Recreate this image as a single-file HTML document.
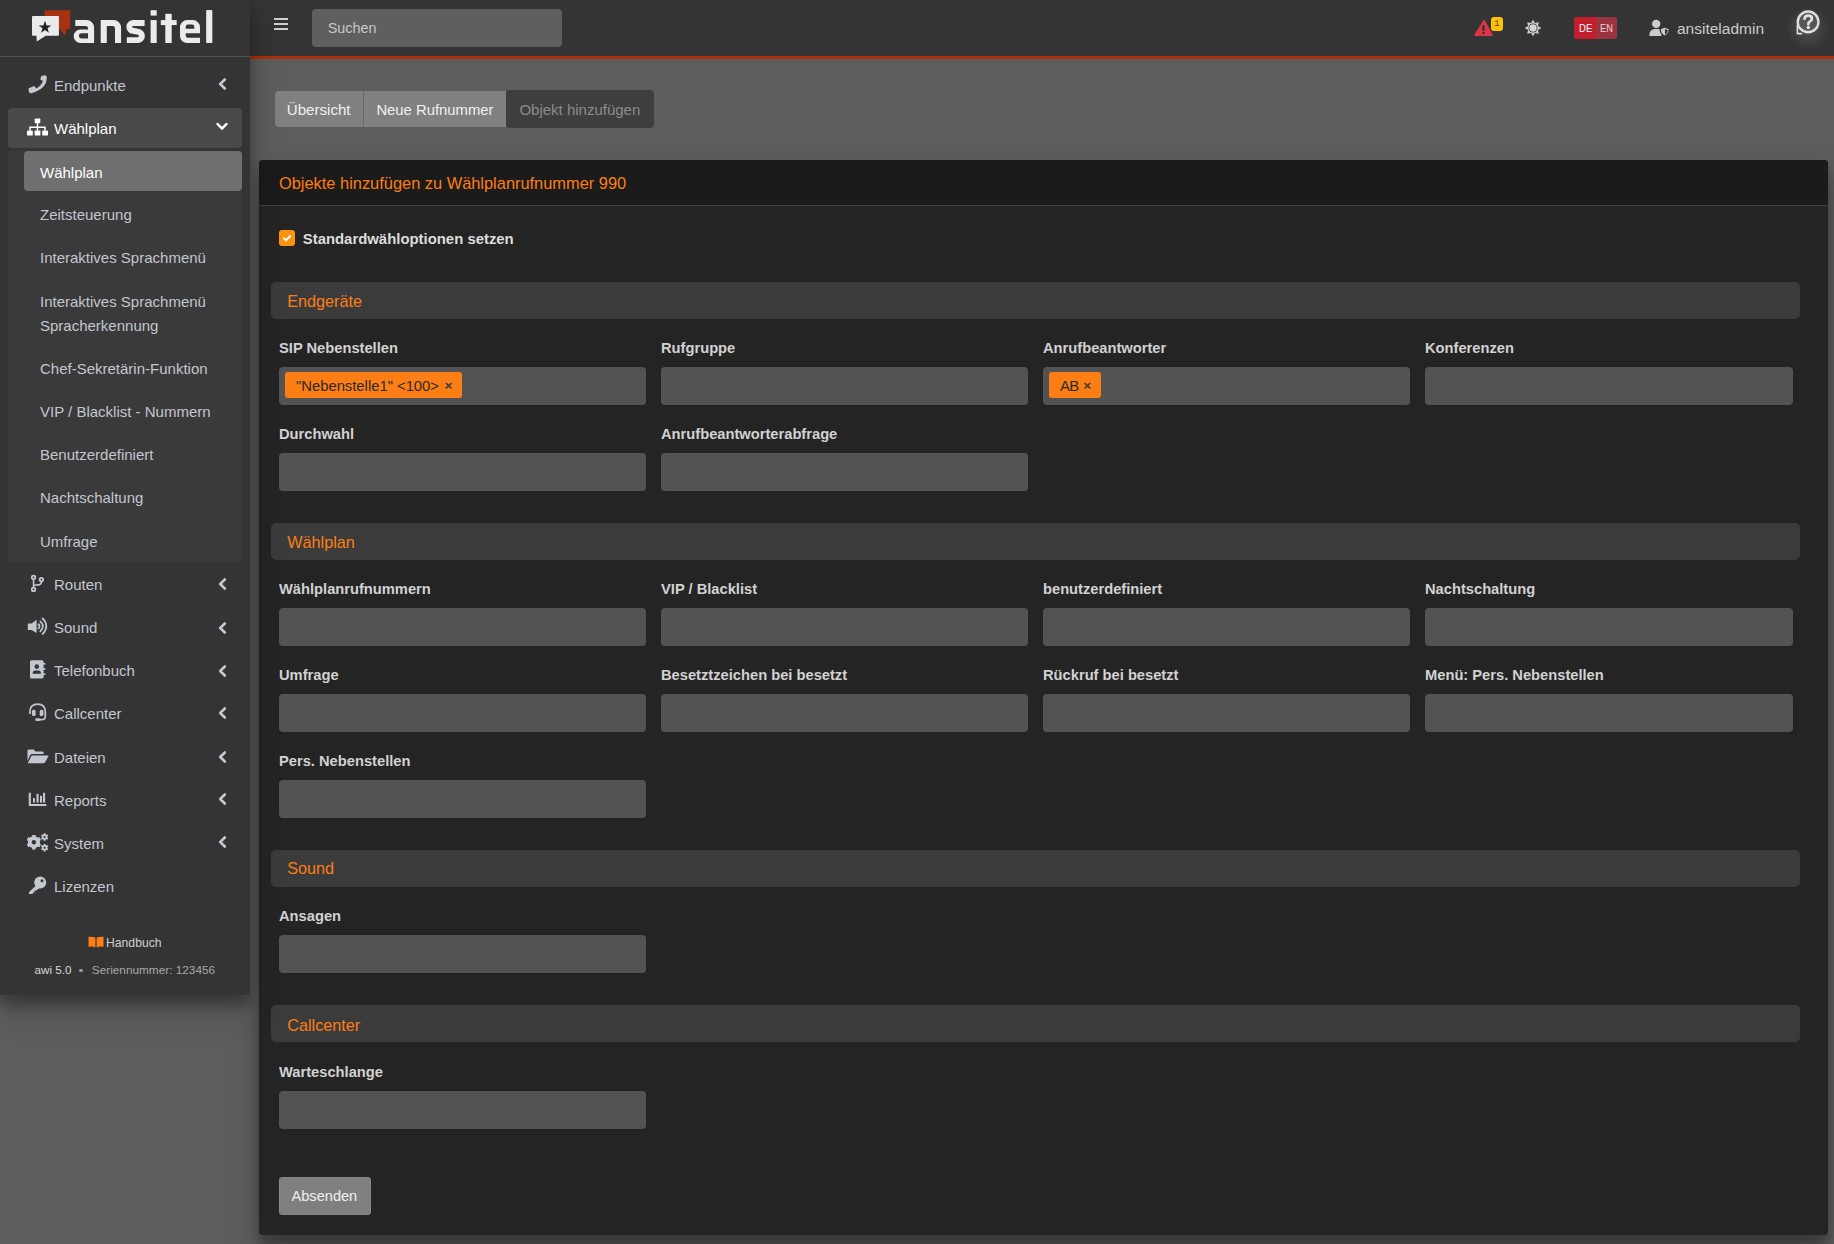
<!DOCTYPE html>
<html><head><meta charset="utf-8">
<style>
*{box-sizing:border-box;margin:0;padding:0}
html,body{width:1834px;height:1244px;overflow:hidden}
body{background:#5d5d5d;font-family:"Liberation Sans",sans-serif;position:relative}
.t{position:absolute;line-height:0;white-space:nowrap}
.r{position:absolute}
</style></head><body>
<div class="r" style="left:250px;top:0px;width:1584px;height:1244px;background:#5d5d5d;border-radius:0px;"></div>
<div class="r" style="left:250px;top:0px;width:1584px;height:56px;background:#343434;border-radius:0px;box-shadow:none"></div>
<div class="r" style="left:250px;top:56px;width:1584px;height:3px;background:#ad300c;border-radius:0px;"></div>
<div class="r" style="left:274px;top:18px;width:14px;height:2px;background:#d0d0d0;border-radius:0px;"></div>
<div class="r" style="left:274px;top:23px;width:14px;height:2px;background:#d0d0d0;border-radius:0px;"></div>
<div class="r" style="left:274px;top:28px;width:14px;height:2px;background:#d0d0d0;border-radius:0px;"></div>
<div class="r" style="left:312px;top:9px;width:250px;height:38px;background:#5f5f5f;border-radius:4px;"></div>
<div class="t" style="left:327.7px;top:28px;font-size:14.4px;color:#c8c8c8;font-weight:400;">Suchen</div>
<svg class="r" style="left:1474px;top:19px;" width="19" height="18" viewBox="0 0 19 18"><path d="M9.5 1.2 Q10.2 0.3 10.9 1.2 L18.6 15.6 Q19 17 17.6 17 L1.4 17 Q0 17 0.4 15.6 Z" fill="#dc3545"/><rect x="8.4" y="6" width="2.2" height="6" rx="1" fill="#343434"/><circle cx="9.5" cy="14" r="1.2" fill="#343434"/></svg>
<div class="r" style="left:1491px;top:17px;width:12px;height:14px;background:#ffc107;border-radius:3px;"></div>
<div class="t" style="left:1494.3px;top:24px;font-size:9px;color:#5c4b12;font-weight:400;font-family:'Liberation Mono',monospace">1</div>
<svg class="r" style="left:1525.3px;top:20px;" width="16" height="16" viewBox="0 0 16 16"><polygon points="8.00,-0.30 10.03,3.10 13.87,2.13 12.90,5.97 16.30,8.00 12.90,10.03 13.87,13.87 10.03,12.90 8.00,16.30 5.97,12.90 2.13,13.87 3.10,10.03 -0.30,8.00 3.10,5.97 2.13,2.13 5.97,3.10" fill="#cfcfcf"/><circle cx="8" cy="8" r="4.5" fill="#343434"/><circle cx="8" cy="8" r="3.7" fill="#d4d4d4"/></svg>
<div class="r" style="left:1574px;top:17px;width:43px;height:22px;background:#9c343f;border-radius:3px;"></div>
<div class="r" style="left:1574px;top:17px;width:22px;height:22px;background:#c21f2e;border-radius:0px;border-radius:3px 0 0 3px"></div>
<div class="t" style="left:1578.8px;top:27.7px;font-size:10.6px;color:#ffffff;font-weight:400;transform:scaleX(0.9);transform-origin:0 0">DE</div>
<div class="t" style="left:1599.6px;top:27.7px;font-size:10.6px;color:#ecccd0;font-weight:400;transform:scaleX(0.88);transform-origin:0 0">EN</div>
<svg class="r" style="left:1649px;top:19px;" width="22" height="19" viewBox="0 0 22 19"><circle cx="7.2" cy="4.9" r="4.2" fill="#cccccc"/><path d="M0.3 16.9 Q0.3 10.2 6 10 L10.2 10 Q11.4 10 12.2 10.4 L12.4 17 L0.8 17 Z" fill="#cccccc"/><path d="M15.75 8 L20.3 9.9 Q20.5 14.9 15.75 17.4 Q11 14.9 11.2 9.9 Z" fill="#cccccc" stroke="#343434" stroke-width="1.3"/><path d="M16 10.1 L18.8 11.2 Q18.7 14.3 16 15.7 Z" fill="#343434"/></svg>
<div class="t" style="left:1677px;top:29px;font-size:15.5px;color:#cccccc;font-weight:400;">ansiteladmin</div>
<div class="r" style="left:1780px;top:4px;width:54px;height:50px;background:radial-gradient(circle at 28px 24px, rgba(255,255,255,.16) 0, rgba(255,255,255,.07) 11px, rgba(255,255,255,0) 22px);border-radius:0px;"></div>
<svg class="r" style="left:1790px;top:4px;" width="36" height="36" viewBox="0 0 36 36"><path d="M7.4 21 L7.4 29.2 Q7.4 29.6 7.8 29.6 L12.2 29.6" stroke="#dddddd" stroke-width="1.6" fill="none"/><circle cx="18.1" cy="17.9" r="10.35" fill="#555555" stroke="#dedede" stroke-width="2.4"/><path d="M14.6 14.8 Q14.6 11.6 18.2 11.6 Q21.9 11.6 21.9 14.6 Q21.9 16.6 19.8 17.6 Q18.3 18.4 18.3 20.2" stroke="#e2e2e2" stroke-width="2.7" fill="none" stroke-linecap="round"/><circle cx="18.3" cy="23.6" r="1.75" fill="#e2e2e2"/></svg>
<div class="r" style="left:0px;top:0px;width:250px;height:995px;background:#343434;border-radius:0px;box-shadow:0 14px 28px rgba(0,0,0,.25),0 10px 10px rgba(0,0,0,.22);z-index:1"></div>
<div class="r" style="left:0;top:0;width:250px;height:995px;z-index:2">
<div class="r" style="left:0px;top:56px;width:250px;height:1px;background:#4b545c;border-radius:0px;"></div>
<svg class="r" style="left:30px;top:8px;" width="44" height="36" viewBox="0 0 44 36"><path d="M14.6 2.2 L40.2 2.2 L40.2 21.3 L36.4 21.3 L35.4 28.1 L30 21.3 L14.6 21.3 Z" fill="#a8310f"/><path d="M3 8.1 L27.9 8.1 Q28.9 8.1 28.9 9.1 L28.9 26.7 Q28.9 27.7 27.9 27.7 L15.7 27.7 L6.7 33.6 L6.5 27.7 L3 27.7 Q2 27.7 2 26.7 L2 9.1 Q2 8.1 3 8.1 Z" fill="#ebebeb"/><polygon points="15,12.8 16.6,17.4 21.3,17.4 17.5,20.2 18.9,24.7 15,21.9 11.1,24.7 12.5,20.2 8.7,17.4 13.4,17.4" fill="#222"/></svg>
<svg class="r" style="left:0;top:0" width="230" height="50" viewBox="0 0 230 50"><g fill="#ebebeb" fill-rule="evenodd"><path d="M75.3 20.1 L86.5 20.1 A7.6 7.6 0 0 1 94.1 27.7 L94.1 43 L80.5 43 A6.8 6.8 0 0 1 73.7 36.2 A6.7 6.7 0 0 1 80.4 29.5 L88 29.5 L88 28.3 A2.2 2.2 0 0 0 85.8 26.1 L75.3 26.1 Z M88 33.2 L81.6 33.2 A2.65 2.65 0 0 0 81.6 38.5 L88 38.5 Z"/><path d="M100.7 43 L100.7 20.1 L113.5 20.1 A7.6 7.6 0 0 1 121.1 27.7 L121.1 43 L115 43 L115 28.5 A2.4 2.4 0 0 0 112.6 26.1 L106.8 26.1 L106.8 43 Z"/><rect x="150.6" y="20.1" width="6.1" height="22.9"/><rect x="150.6" y="10.2" width="6.1" height="5.4"/><rect x="165.3" y="13.8" width="6.4" height="29.2"/><rect x="160.8" y="20.1" width="15.9" height="5"/><path d="M200 43 L187.2 43 A7.2 7.2 0 0 1 180 35.8 L180 27.3 A7.2 7.2 0 0 1 187.2 20.1 L192.8 20.1 A7.2 7.2 0 0 1 200 27.3 L200 33.2 L185.7 33.2 L185.7 35.4 A2.3 2.3 0 0 0 188 37.7 L200 37.7 Z M185.7 28.7 L194.3 28.7 L194.3 26.9 A2.3 2.3 0 0 0 192 24.6 L188 24.6 A2.3 2.3 0 0 0 185.7 26.9 Z"/><rect x="206.2" y="10.1" width="6.1" height="32.9"/></g><path d="M144.6 23.05 L133.4 23.05 A3.7 3.7 0 0 0 132.9 30.8 L138.5 31.9 A4.15 4.15 0 0 1 138.2 40.1 L126.8 40.1" stroke="#ebebeb" stroke-width="5.9" fill="none"/></svg>
<svg class="r" style="left:28px;top:75px;" width="20" height="19" viewBox="0 0 20 19"><path d="M13.2 0.9 L16.6 0.3 Q18.7 0.1 18.8 2.4 Q18.9 13.6 3.4 18.2 Q1.1 18.6 0.8 16.6 L0.6 13.2 L6.2 11.1 L8.3 13.6 Q13.1 10.8 15 6.1 L12.3 4.6 Z" fill="#c2c7d0"/></svg>
<div class="t" style="left:54px;top:86.4px;font-size:15px;color:#c2c7d0;font-weight:400;">Endpunkte</div>
<svg class="r" style="left:218px;top:78.3px;" width="9" height="12" viewBox="0 0 9 12"><path d="M6.8 1.5 L2.2 6 L6.8 10.5" stroke="#c2c7d0" stroke-width="2.6" fill="none" stroke-linecap="round" stroke-linejoin="round"/></svg>
<div class="r" style="left:8px;top:108px;width:234px;height:40px;background:#494949;border-radius:4px;"></div>
<svg class="r" style="left:26px;top:118px;" width="23" height="18" viewBox="0 0 23 18"><rect x="8.7" y="0.4" width="5.6" height="4.8" rx="0.9" fill="#fff"/><path d="M11.5 5 L11.5 12.6 M4 12.6 L4 9.3 L19 9.3 L19 12.6" stroke="#fff" stroke-width="1.5" fill="none"/><rect x="1" y="12.4" width="5.8" height="5.2" rx="0.9" fill="#fff"/><rect x="8.6" y="12.4" width="5.8" height="5.2" rx="0.9" fill="#fff"/><rect x="16.2" y="12.4" width="5.8" height="5.2" rx="0.9" fill="#fff"/></svg>
<div class="t" style="left:54px;top:129.3px;font-size:15px;color:#ffffff;font-weight:400;">Wählplan</div>
<svg class="r" style="left:216px;top:122px;" width="12" height="9" viewBox="0 0 12 9"><path d="M1.6 2 L6 6.6 L10.4 2" stroke="#ffffff" stroke-width="2.5" fill="none" stroke-linecap="round" stroke-linejoin="round"/></svg>
<div class="r" style="left:8px;top:150.6px;width:234px;height:410px;background:#3a3a3a;border-radius:0px;"></div>
<div class="r" style="left:24px;top:151px;width:218px;height:40px;background:#6f6f6f;border-radius:4px;"></div>
<div class="t" style="left:40px;top:172.5px;font-size:15px;color:#ffffff;font-weight:400;">Wählplan</div>
<div class="t" style="left:40px;top:215.4px;font-size:15px;color:#c2c7d0;font-weight:400;">Zeitsteuerung</div>
<div class="t" style="left:40px;top:258.3px;font-size:15px;color:#c2c7d0;font-weight:400;">Interaktives Sprachmenü</div>
<div class="t" style="left:40px;top:302.2px;font-size:15px;color:#c2c7d0;font-weight:400;">Interaktives Sprachmenü</div>
<div class="t" style="left:40px;top:326.3px;font-size:15px;color:#c2c7d0;font-weight:400;">Spracherkennung</div>
<div class="t" style="left:40px;top:369.2px;font-size:15px;color:#c2c7d0;font-weight:400;">Chef-Sekretärin-Funktion</div>
<div class="t" style="left:40px;top:412.2px;font-size:15px;color:#c2c7d0;font-weight:400;">VIP / Blacklist - Nummern</div>
<div class="t" style="left:40px;top:454.9px;font-size:15px;color:#c2c7d0;font-weight:400;">Benutzerdefiniert</div>
<div class="t" style="left:40px;top:498.3px;font-size:15px;color:#c2c7d0;font-weight:400;">Nachtschaltung</div>
<div class="t" style="left:40px;top:541.7px;font-size:15px;color:#c2c7d0;font-weight:400;">Umfrage</div>
<svg class="r" style="left:30px;top:574px;" width="15" height="19" viewBox="0 0 15 19"><circle cx="3.56" cy="3.3" r="1.75" stroke="#c2c7d0" stroke-width="1.8" fill="none"/><circle cx="3.56" cy="15.4" r="1.75" stroke="#c2c7d0" stroke-width="1.8" fill="none"/><circle cx="11.4" cy="5.6" r="1.75" stroke="#c2c7d0" stroke-width="1.8" fill="none"/><path d="M3.56 5.1 L3.56 13.6 M11.4 7.4 Q11.4 10.7 8 10.9 L6.2 11 Q3.56 11.2 3.56 12.8" stroke="#c2c7d0" stroke-width="1.6" fill="none"/></svg>
<div class="t" style="left:54px;top:585.1px;font-size:15px;color:#c2c7d0;font-weight:400;">Routen</div>
<svg class="r" style="left:218px;top:577.6px;" width="9" height="12" viewBox="0 0 9 12"><path d="M6.8 1.5 L2.2 6 L6.8 10.5" stroke="#c2c7d0" stroke-width="2.6" fill="none" stroke-linecap="round" stroke-linejoin="round"/></svg>
<svg class="r" style="left:27px;top:617px;" width="22" height="19" viewBox="0 0 22 19"><path d="M0.8 6.5 L4.6 6.5 L9.6 2.7 L9.6 16 L4.6 13 L0.8 13 Z" fill="#c2c7d0"/><path d="M11.4 7.3 Q13.8 9.35 11.4 11.4" stroke="#c2c7d0" stroke-width="1.8" fill="none" stroke-linecap="round"/><path d="M13.3 4.4 Q18.6 9.35 13.3 14.3" stroke="#c2c7d0" stroke-width="1.7" fill="none" stroke-linecap="round"/><path d="M15.6 1.4 Q23 9.2 15.6 17" stroke="#c2c7d0" stroke-width="1.7" fill="none" stroke-linecap="round"/></svg>
<div class="t" style="left:54px;top:628px;font-size:15px;color:#c2c7d0;font-weight:400;">Sound</div>
<svg class="r" style="left:218px;top:621.8px;" width="9" height="12" viewBox="0 0 9 12"><path d="M6.8 1.5 L2.2 6 L6.8 10.5" stroke="#c2c7d0" stroke-width="2.6" fill="none" stroke-linecap="round" stroke-linejoin="round"/></svg>
<svg class="r" style="left:29px;top:660px;" width="17" height="19" viewBox="0 0 17 19"><rect x="1" y="0.2" width="13.6" height="18.4" rx="1.6" fill="#c2c7d0"/><rect x="14" y="3" width="2.4" height="1.6" fill="#c2c7d0"/><rect x="14" y="8.2" width="2.4" height="1.6" fill="#c2c7d0"/><rect x="14" y="13.4" width="2.4" height="1.6" fill="#c2c7d0"/><circle cx="7.8" cy="6.6" r="2.3" fill="#343434"/><path d="M3.6 13.8 Q3.6 10.4 6.4 10.4 L9.2 10.4 Q12 10.4 12 13.8 Z" fill="#343434"/></svg>
<div class="t" style="left:54px;top:670.9px;font-size:15px;color:#c2c7d0;font-weight:400;">Telefonbuch</div>
<svg class="r" style="left:218px;top:664.9px;" width="9" height="12" viewBox="0 0 9 12"><path d="M6.8 1.5 L2.2 6 L6.8 10.5" stroke="#c2c7d0" stroke-width="2.6" fill="none" stroke-linecap="round" stroke-linejoin="round"/></svg>
<svg class="r" style="left:28px;top:703px;" width="20" height="19" viewBox="0 0 20 19"><path d="M1.9 10.9 L1.9 9 Q1.9 1.1 9.7 1.1 Q17.3 1.1 17.3 9 L17.3 13.2 Q17.3 16.7 13.8 16.7 L10 16.7" stroke="#c2c7d0" stroke-width="1.7" fill="none"/><rect x="3.9" y="6.8" width="3.7" height="6.2" rx="1.6" fill="#c2c7d0"/><rect x="11.7" y="6.8" width="3.7" height="6.2" rx="1.6" fill="#c2c7d0"/><rect x="7.2" y="15.3" width="4.8" height="2.7" rx="1.35" fill="#c2c7d0"/></svg>
<div class="t" style="left:54px;top:714px;font-size:15px;color:#c2c7d0;font-weight:400;">Callcenter</div>
<svg class="r" style="left:218px;top:707.3px;" width="9" height="12" viewBox="0 0 9 12"><path d="M6.8 1.5 L2.2 6 L6.8 10.5" stroke="#c2c7d0" stroke-width="2.6" fill="none" stroke-linecap="round" stroke-linejoin="round"/></svg>
<svg class="r" style="left:27px;top:749px;" width="22" height="15" viewBox="0 0 22 15"><path d="M0.5 12 L0.5 1.6 Q0.5 0.5 1.6 0.5 L6.6 0.5 L8.4 2.4 L15.5 2.4 Q16.6 2.4 16.6 3.5 L16.6 5 L5 5 Q3.6 5 3 6.2 Z" fill="#c2c7d0"/><path d="M4.6 6.4 L21 6.4 Q21.8 6.4 21.4 7.2 L18 13.4 Q17.5 14.2 16.6 14.2 L0.8 14.2 Z" fill="#c2c7d0"/></svg>
<div class="t" style="left:54px;top:758px;font-size:15px;color:#c2c7d0;font-weight:400;">Dateien</div>
<svg class="r" style="left:218px;top:750.5px;" width="9" height="12" viewBox="0 0 9 12"><path d="M6.8 1.5 L2.2 6 L6.8 10.5" stroke="#c2c7d0" stroke-width="2.6" fill="none" stroke-linecap="round" stroke-linejoin="round"/></svg>
<svg class="r" style="left:28px;top:792px;" width="19" height="15" viewBox="0 0 19 15"><path d="M1.8 0.8 L1.8 13.05 L18.3 13.05" stroke="#c2c7d0" stroke-width="2.1" fill="none"/><rect x="5" y="6" width="1.9" height="4.6" fill="#c2c7d0"/><rect x="8.5" y="1.8" width="2.1" height="8.8" fill="#c2c7d0"/><rect x="12" y="3.8" width="2.1" height="6.8" fill="#c2c7d0"/><rect x="15" y="0.8" width="2.1" height="9.8" fill="#c2c7d0"/></svg>
<div class="t" style="left:54px;top:800.9px;font-size:15px;color:#c2c7d0;font-weight:400;">Reports</div>
<svg class="r" style="left:218px;top:793.3px;" width="9" height="12" viewBox="0 0 9 12"><path d="M6.8 1.5 L2.2 6 L6.8 10.5" stroke="#c2c7d0" stroke-width="2.6" fill="none" stroke-linecap="round" stroke-linejoin="round"/></svg>
<svg class="r" style="left:26px;top:833px;" width="23" height="19" viewBox="0 0 23 19"><polygon points="13.67,10.41 15.06,11.44 13.42,14.28 11.84,13.59 9.73,14.81 9.54,16.52 6.26,16.52 6.07,14.81 3.96,13.59 2.38,14.28 0.74,11.44 2.13,10.41 2.13,7.99 0.74,6.96 2.38,4.12 3.96,4.81 6.07,3.59 6.26,1.88 9.54,1.88 9.73,3.59 11.84,4.81 13.42,4.12 15.06,6.96 13.67,7.99" fill="#c2c7d0"/><circle cx="7.9" cy="9.2" r="5.9" fill="#c2c7d0"/><circle cx="7.9" cy="9.2" r="2.2" fill="#343434"/><polygon points="21.26,4.45 22.26,5.03 21.32,6.65 20.32,6.08 19.54,6.53 19.53,7.68 17.67,7.68 17.66,6.53 16.88,6.08 15.88,6.65 14.94,5.03 15.94,4.45 15.94,3.55 14.94,2.97 15.88,1.35 16.88,1.92 17.66,1.47 17.67,0.32 19.53,0.32 19.54,1.47 20.32,1.92 21.32,1.35 22.26,2.97 21.26,3.55" fill="#c2c7d0"/><circle cx="18.6" cy="4" r="2.7" fill="#c2c7d0"/><circle cx="18.6" cy="4" r="1.05" fill="#343434"/><polygon points="21.26,15.15 22.26,15.73 21.32,17.35 20.32,16.78 19.54,17.23 19.53,18.38 17.67,18.38 17.66,17.23 16.88,16.78 15.88,17.35 14.94,15.73 15.94,15.15 15.94,14.25 14.94,13.67 15.88,12.05 16.88,12.62 17.66,12.17 17.67,11.02 19.53,11.02 19.54,12.17 20.32,12.62 21.32,12.05 22.26,13.67 21.26,14.25" fill="#c2c7d0"/><circle cx="18.6" cy="14.7" r="2.7" fill="#c2c7d0"/><circle cx="18.6" cy="14.7" r="1.05" fill="#343434"/></svg>
<div class="t" style="left:54px;top:844px;font-size:15px;color:#c2c7d0;font-weight:400;">System</div>
<svg class="r" style="left:218px;top:835.9px;" width="9" height="12" viewBox="0 0 9 12"><path d="M6.8 1.5 L2.2 6 L6.8 10.5" stroke="#c2c7d0" stroke-width="2.6" fill="none" stroke-linecap="round" stroke-linejoin="round"/></svg>
<svg class="r" style="left:28px;top:875px;" width="19" height="20" viewBox="0 0 19 20"><circle cx="12.2" cy="7.4" r="6" fill="#c2c7d0"/><circle cx="14" cy="5.8" r="1.5" fill="#343434"/><path d="M9.2 9.6 L1.6 16.4 Q1 17 1 17.8 L1 19 L4.8 19 L4.8 17.4 L6.6 17.4 L6.6 15.6 L8.4 15.6 L12.4 12.2 Z" fill="#c2c7d0"/></svg>
<div class="t" style="left:54px;top:886.9px;font-size:15px;color:#c2c7d0;font-weight:400;">Lizenzen</div>
<svg class="r" style="left:88px;top:936px;" width="16" height="12" viewBox="0 0 16 12"><path d="M0.5 0.8 Q4 0.3 7.4 1.6 L7.4 11.4 Q4 10.2 0.5 10.8 Z" fill="#fd7e14"/><path d="M15.5 0.8 Q12 0.3 8.6 1.6 L8.6 11.4 Q12 10.2 15.5 10.8 Z" fill="#fd7e14"/></svg>
<div class="t" style="left:106px;top:943px;font-size:12.2px;color:#cfcfcf;font-weight:400;">Handbuch</div>
<div class="t" style="left:34.5px;top:970px;font-size:11.7px;color:#d8d8d8;font-weight:400;">awi 5.0</div>
<div class="r" style="left:79.3px;top:968.6px;width:3.4px;height:3.4px;background:#9a9a9a;border-radius:2px;"></div>
<div class="t" style="left:91.8px;top:970px;font-size:11.8px;color:#a8a8a8;font-weight:400;">Seriennummer: 123456</div>
</div>
<div class="r" style="left:506px;top:90px;width:148px;height:38px;background:#3e3e3e;border-radius:4px;"></div>
<div class="r" style="left:275px;top:91px;width:231px;height:36px;background:#808080;border-radius:0px;border-radius:4px 0 0 4px"></div>
<div class="r" style="left:363px;top:91px;width:1px;height:36px;background:#6a6a6a;border-radius:0px;"></div>
<div class="t" style="left:286.8px;top:110.2px;font-size:15.1px;color:#f0f0f0;font-weight:400;">Übersicht</div>
<div class="t" style="left:376.4px;top:110.2px;font-size:14.85px;color:#f0f0f0;font-weight:400;">Neue Rufnummer</div>
<div class="t" style="left:519.4px;top:110.2px;font-size:15px;color:#8c8c8c;font-weight:400;">Objekt hinzufügen</div>
<div class="r" style="left:259px;top:160px;width:1569px;height:1075px;background:#242424;border-radius:4px;box-shadow:0 14px 28px rgba(0,0,0,.25),0 10px 10px rgba(0,0,0,.22)"></div>
<div class="r" style="left:259px;top:160px;width:1569px;height:45px;background:#1b1b1b;border-radius:0px;border-radius:4px 4px 0 0"></div>
<div class="r" style="left:259px;top:205px;width:1569px;height:1px;background:#38414a;border-radius:0px;"></div>
<div class="t" style="left:279px;top:182.8px;font-size:16.4px;color:#fd7e14;font-weight:400;">Objekte hinzufügen zu Wählplanrufnummer 990</div>
<svg class="r" style="left:279px;top:230px;" width="16" height="16" viewBox="0 0 16 16"><rect x="0" y="0" width="16" height="16" rx="3" fill="#fa9410"/><path d="M4.9 8.3 L7.1 10.4 L11.2 6" stroke="#fff" stroke-width="1.9" fill="none" stroke-linecap="round" stroke-linejoin="round"/></svg>
<div class="t" style="left:302.75px;top:239px;font-size:14.9px;color:#dddddd;font-weight:700;">Standardwähloptionen setzen</div>
<div class="r" style="left:271px;top:282px;width:1529px;height:37px;background:#3b3b3b;border-radius:5px;"></div>
<div class="t" style="left:287.3px;top:300.7px;font-size:16.2px;color:#fd7e14;font-weight:400;">Endgeräte</div>
<div class="r" style="left:271px;top:523px;width:1529px;height:37px;background:#3b3b3b;border-radius:5px;"></div>
<div class="t" style="left:287.3px;top:541.8px;font-size:16.2px;color:#fd7e14;font-weight:400;">Wählplan</div>
<div class="r" style="left:271px;top:850px;width:1529px;height:37px;background:#3b3b3b;border-radius:5px;"></div>
<div class="t" style="left:287.3px;top:868.3px;font-size:16.2px;color:#fd7e14;font-weight:400;">Sound</div>
<div class="r" style="left:271px;top:1005px;width:1529px;height:37px;background:#3b3b3b;border-radius:5px;"></div>
<div class="t" style="left:287.3px;top:1024.8px;font-size:16.2px;color:#fd7e14;font-weight:400;">Callcenter</div>
<div class="t" style="left:279px;top:348.3px;font-size:14.7px;color:#d2d2d2;font-weight:700;">SIP Nebenstellen</div>
<div class="r" style="left:279px;top:367px;width:367px;height:38px;background:#535353;border-radius:4px;"></div>
<div class="t" style="left:661px;top:348.3px;font-size:14.7px;color:#d2d2d2;font-weight:700;">Rufgruppe</div>
<div class="r" style="left:661px;top:367px;width:367px;height:38px;background:#535353;border-radius:4px;"></div>
<div class="t" style="left:1043px;top:348.3px;font-size:14.7px;color:#d2d2d2;font-weight:700;">Anrufbeantworter</div>
<div class="r" style="left:1043px;top:367px;width:367px;height:38px;background:#535353;border-radius:4px;"></div>
<div class="t" style="left:1425px;top:348.3px;font-size:14.7px;color:#d2d2d2;font-weight:700;">Konferenzen</div>
<div class="r" style="left:1425px;top:367px;width:368px;height:38px;background:#535353;border-radius:4px;"></div>
<div class="t" style="left:279px;top:434.3px;font-size:14.7px;color:#d2d2d2;font-weight:700;">Durchwahl</div>
<div class="r" style="left:279px;top:453px;width:367px;height:38px;background:#535353;border-radius:4px;"></div>
<div class="t" style="left:661px;top:434.3px;font-size:14.7px;color:#d2d2d2;font-weight:700;">Anrufbeantworterabfrage</div>
<div class="r" style="left:661px;top:453px;width:367px;height:38px;background:#535353;border-radius:4px;"></div>
<div class="t" style="left:279px;top:589.3px;font-size:14.7px;color:#d2d2d2;font-weight:700;">Wählplanrufnummern</div>
<div class="r" style="left:279px;top:608px;width:367px;height:38px;background:#535353;border-radius:4px;"></div>
<div class="t" style="left:661px;top:589.3px;font-size:14.7px;color:#d2d2d2;font-weight:700;">VIP / Blacklist</div>
<div class="r" style="left:661px;top:608px;width:367px;height:38px;background:#535353;border-radius:4px;"></div>
<div class="t" style="left:1043px;top:589.3px;font-size:14.7px;color:#d2d2d2;font-weight:700;">benutzerdefiniert</div>
<div class="r" style="left:1043px;top:608px;width:367px;height:38px;background:#535353;border-radius:4px;"></div>
<div class="t" style="left:1425px;top:589.3px;font-size:14.7px;color:#d2d2d2;font-weight:700;">Nachtschaltung</div>
<div class="r" style="left:1425px;top:608px;width:368px;height:38px;background:#535353;border-radius:4px;"></div>
<div class="t" style="left:279px;top:675.3px;font-size:14.7px;color:#d2d2d2;font-weight:700;">Umfrage</div>
<div class="r" style="left:279px;top:694px;width:367px;height:38px;background:#535353;border-radius:4px;"></div>
<div class="t" style="left:661px;top:675.3px;font-size:14.7px;color:#d2d2d2;font-weight:700;">Besetztzeichen bei besetzt</div>
<div class="r" style="left:661px;top:694px;width:367px;height:38px;background:#535353;border-radius:4px;"></div>
<div class="t" style="left:1043px;top:675.3px;font-size:14.7px;color:#d2d2d2;font-weight:700;">Rückruf bei besetzt</div>
<div class="r" style="left:1043px;top:694px;width:367px;height:38px;background:#535353;border-radius:4px;"></div>
<div class="t" style="left:1425px;top:675.3px;font-size:14.7px;color:#d2d2d2;font-weight:700;">Menü: Pers. Nebenstellen</div>
<div class="r" style="left:1425px;top:694px;width:368px;height:38px;background:#535353;border-radius:4px;"></div>
<div class="t" style="left:279px;top:761.3px;font-size:14.7px;color:#d2d2d2;font-weight:700;">Pers. Nebenstellen</div>
<div class="r" style="left:279px;top:780px;width:367px;height:38px;background:#535353;border-radius:4px;"></div>
<div class="t" style="left:279px;top:916.3px;font-size:14.7px;color:#d2d2d2;font-weight:700;">Ansagen</div>
<div class="r" style="left:279px;top:935px;width:367px;height:38px;background:#535353;border-radius:4px;"></div>
<div class="t" style="left:279px;top:1072.3px;font-size:14.7px;color:#d2d2d2;font-weight:700;">Warteschlange</div>
<div class="r" style="left:279px;top:1091px;width:367px;height:38px;background:#535353;border-radius:4px;"></div>
<div class="r" style="left:285px;top:372px;width:177px;height:26px;background:#fd7e14;border-radius:3px;"></div>
<div class="t" style="left:296px;top:385.5px;font-size:14.8px;color:#2a2a2a;font-weight:400;">"Nebenstelle1" &lt;100&gt;</div>
<div class="t" style="left:444.6px;top:386px;font-size:13.5px;color:#3f3a35;font-weight:700;">×</div>
<div class="r" style="left:1049px;top:372px;width:52px;height:26px;background:#fd7e14;border-radius:3px;"></div>
<div class="t" style="left:1060px;top:385.5px;font-size:14.8px;color:#2a2a2a;font-weight:400;letter-spacing:-0.6px">AB</div>
<div class="t" style="left:1083.3px;top:386px;font-size:13.5px;color:#3f3a35;font-weight:700;">×</div>
<div class="r" style="left:279px;top:1177px;width:92px;height:38px;background:#7f7f7f;border-radius:3px;border:1px solid #898989"></div>
<div class="t" style="left:291.5px;top:1196.4px;font-size:14.6px;color:#f0f0f0;font-weight:400;">Absenden</div>
</body></html>
